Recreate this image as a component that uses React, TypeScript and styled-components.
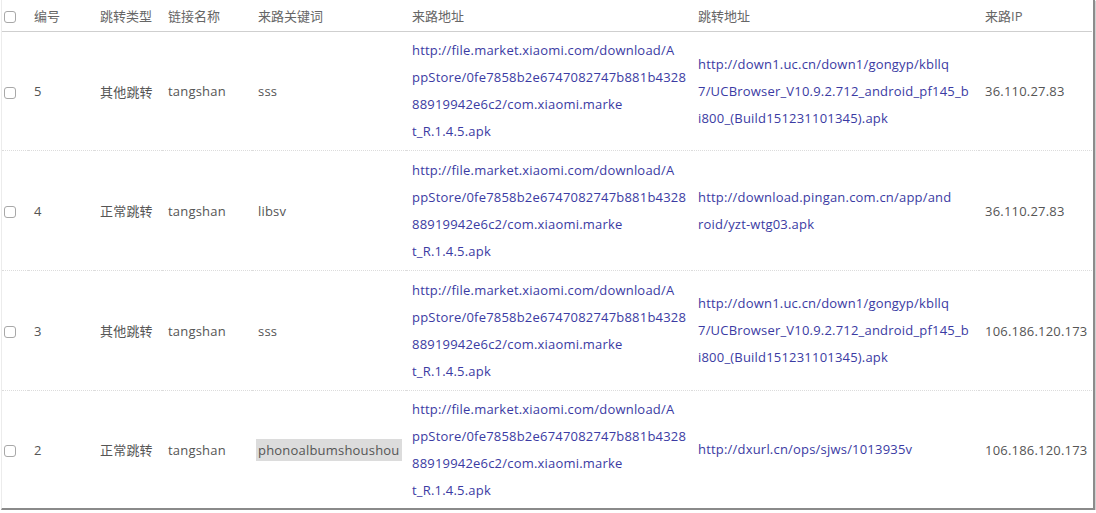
import React from "react";
import styled, { createGlobalStyle } from "styled-components";

const Global = createGlobalStyle`
  html, body { margin: 0; padding: 0; background: #fff; }
  body { font-family: "Open Sans", "Noto Sans CJK SC", sans-serif; }
`;

const Frame = styled.div`
  width: 1091px;
  margin-left: 1px;
  border-left: 1px solid #ececec;
  border-right: 2px solid #8c8c8c;
  border-bottom: 2px solid #8a8a8a;
  box-shadow: 1px 1px 1px rgba(0, 0, 0, 0.18);
  background: #fff;
`;

const Table = styled.table`
  width: 1090px;
  table-layout: fixed;
  border-collapse: separate;
  border-spacing: 0;
  font-size: 13px;
  letter-spacing: 0.2px;
  font-family: "Open Sans", "Noto Sans CJK SC", sans-serif;
`;

const Th = styled.th`
  height: 31px;
  padding: 0 0 0 6px;
  text-align: left;
  font-weight: normal;
  color: #666;
  border-bottom: 1px solid #cfcfcf;
  vertical-align: middle;
  white-space: nowrap;
  letter-spacing: 0;
`;

const CheckTh = styled(Th)`
  padding-left: 2px;
`;

const Tr = styled.tr<{ $last?: boolean; $first?: boolean }>`
  & > td {
    height: ${(p) => (p.$first ? "118px" : p.$last ? "117px" : "119px")};
    border-bottom: ${(p) => (p.$last ? "none" : "1px dotted #dcdcdc")};
  }
`;

const Td = styled.td`
  padding: 0 0 0 6px;
  color: #555;
  vertical-align: middle;
  white-space: nowrap;
  overflow: hidden;
`;

const CheckTd = styled(Td)`
  padding-left: 2px;
`;

const Box = styled.span`
  display: inline-block;
  box-sizing: border-box;
  width: 12px;
  height: 12px;
  border: 1px solid #a8a8a8;
  border-radius: 3px;
  background: #fff;
  vertical-align: middle;
`;

const Links = styled.div`
  display: flex;
  flex-direction: column;
`;

const LinkLine = styled.span`
  color: #3b3ba3;
  line-height: 27px;
  white-space: nowrap;
`;

const Mark = styled.span`
  background: #dcdcdc;
  padding: 2px 2px;
  margin-left: -2px;
`;

type Row = {
  id: string;
  type: string;
  name: string;
  kw: string;
  mark?: boolean;
  from: string[];
  to: string[];
  ip: string;
};

const FROM = [
  "http://file.market.xiaomi.com/download/A",
  "ppStore/0fe7858b2e6747082747b881b4328",
  "88919942e6c2/com.xiaomi.marke",
  "t_R.1.4.5.apk",
];

const UC = [
  "http://down1.uc.cn/down1/gongyp/kbllq",
  "7/UCBrowser_V10.9.2.712_android_pf145_b",
  "i800_(Build151231101345).apk",
];

const rows: Row[] = [
  { id: "5", type: "其他跳转", name: "tangshan", kw: "sss", from: FROM, to: UC, ip: "36.110.27.83" },
  {
    id: "4",
    type: "正常跳转",
    name: "tangshan",
    kw: "libsv",
    from: FROM,
    to: ["http://download.pingan.com.cn/app/and", "roid/yzt-wtg03.apk"],
    ip: "36.110.27.83",
  },
  { id: "3", type: "其他跳转", name: "tangshan", kw: "sss", from: FROM, to: UC, ip: "106.186.120.173" },
  {
    id: "2",
    type: "正常跳转",
    name: "tangshan",
    kw: "phonoalbumshoushou",
    mark: true,
    from: FROM,
    to: ["http://dxurl.cn/ops/sjws/1013935v"],
    ip: "106.186.120.173",
  },
];

const widths = [26, 66, 68, 90, 154, 286, 287, 113];

export default function App() {
  return (
    <>
      <Global />
      <Frame>
        <Table>
          <colgroup>
            {widths.map((w, i) => (
              <col key={i} style={{ width: w }} />
            ))}
          </colgroup>
          <thead>
            <tr>
              <CheckTh>
                <Box />
              </CheckTh>
              <Th>编号</Th>
              <Th>跳转类型</Th>
              <Th>链接名称</Th>
              <Th>来路关键词</Th>
              <Th>来路地址</Th>
              <Th>跳转地址</Th>
              <Th>来路IP</Th>
            </tr>
          </thead>
          <tbody>
            {rows.map((r, i) => (
              <Tr key={r.id} $first={i === 0} $last={i === rows.length - 1}>
                <CheckTd>
                  <Box />
                </CheckTd>
                <Td>{r.id}</Td>
                <Td>{r.type}</Td>
                <Td>{r.name}</Td>
                <Td>{r.mark ? <Mark>{r.kw}</Mark> : r.kw}</Td>
                <Td>
                  <Links>
                    {r.from.map((l, j) => (
                      <LinkLine key={j}>{l}</LinkLine>
                    ))}
                  </Links>
                </Td>
                <Td>
                  <Links>
                    {r.to.map((l, j) => (
                      <LinkLine key={j}>{l}</LinkLine>
                    ))}
                  </Links>
                </Td>
                <Td>{r.ip}</Td>
              </Tr>
            ))}
          </tbody>
        </Table>
      </Frame>
    </>
  );
}
